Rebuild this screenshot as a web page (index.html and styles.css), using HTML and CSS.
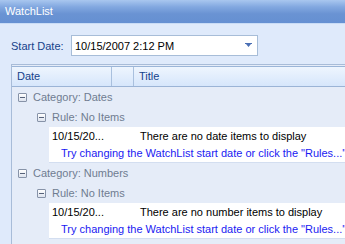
FILE: index.html
```html
<!DOCTYPE html>
<html>
<head>
<meta charset="utf-8">
<link rel="stylesheet" href="styles.css">
</head>
<body>
<div class="window">
  <div class="titlebar">WatchList</div>
  <div class="toolbar">
    <span class="label">Start Date:</span>
    <div class="combo">
      <span class="combo-text">10/15/2007 2:12 PM</span>
      <svg class="combo-arrow" width="7" height="5" viewBox="0 0 7 5"><path d="M0 0h7v1H0z M1 1h5l-2.5 3z" fill="#4b6fb4"/></svg>
    </div>
  </div>
  <div class="grid">
    <div class="grid-header">
      <div class="col col-date">Date</div>
      <div class="col col-gap"></div>
      <div class="col col-title">Title</div>
    </div>
    <div class="grid-body">
      <div class="group cat"><span class="toggle"></span>Category: Dates</div>
      <div class="group rule"><span class="toggle"></span>Rule: No Items</div>
      <div class="item">
        <div class="item-line"><span class="item-date">10/15/20...</span><span>There are no date items to display</span></div>
        <div class="item-link">Try changing the WatchList start date or click the "Rules..."</div>
      </div>
      <div class="group cat"><span class="toggle"></span>Category: Numbers</div>
      <div class="group rule"><span class="toggle"></span>Rule: No Items</div>
      <div class="item">
        <div class="item-line"><span class="item-date">10/15/20...</span><span>There are no number items to display</span></div>
        <div class="item-link">Try changing the WatchList start date or click the "Rules..."</div>
      </div>
      <div class="group cat"><span class="toggle"></span>Category: Hold</div>
    </div>
  </div>
</div>
</body>
</html>
```
FILE: styles.css
```css
html, body {
  margin: 0;
  padding: 0;
}
body {
  width: 345px;
  height: 244px;
  overflow: hidden;
  background: #dfeafb;
  font-family: "Liberation Sans", Arial, sans-serif;
  font-size: 11px;
}
.window {
  display: flex;
  flex-direction: column;
  width: 345px;
  height: 244px;
  overflow: hidden;
}
.titlebar {
  height: 23px;
  line-height: 22px;
  padding-left: 5px;
  color: #ffffff;
  font-size: 11px;
  background: linear-gradient(#a9c7ef 0, #82a8e0 30%, #6a93d3 60%, #6590d2 100%);
  border-bottom: 1px solid #c9dcf6;
  flex: none;
}
.toolbar {
  display: flex;
  align-items: center;
  padding: 11px 0 0 11px;
  height: 21px;
  flex: none;
}
.label {
  color: #15428b;
  font-size: 11px;
  width: 60px;
}
.combo {
  box-sizing: border-box;
  width: 187px;
  height: 21px;
  background: #fff;
  border: 1px solid #a7bdd8;
  display: flex;
  align-items: center;
  padding-left: 3px;
  padding-right: 5px;
}
.combo-text {
  flex: 1;
  color: #000;
  font-size: 11px;
}
.combo-arrow {
  display: block;
}
.grid {
  margin-top: 8px;
  margin-left: 11px;
  border-top: 1px solid #a8bcd8;
  border-left: 1px solid #a8bcd8;
  padding-top: 1px;
  background: #e5ecf8;
  flex: 1;
  display: flex;
  flex-direction: column;
}
.grid-header {
  display: flex;
  height: 19px;
  border-top: 1px solid #9bb5d8;
  border-bottom: 1px solid #9bb4d6;
  background: linear-gradient(#eef5fe, #d6e6fb);
  flex: none;
}
.col {
  box-sizing: border-box;
  line-height: 19px;
  color: #15428b;
  font-size: 11px;
  border-right: 1px solid #a9c0de;
}
.col-date {
  width: 100px;
  padding-left: 5px;
}
.col-gap {
  width: 22px;
}
.col-title {
  flex: 1;
  padding-left: 5px;
  border-right: none;
}
.grid-body {
  display: flex;
  flex-direction: column;
}
.group {
  height: 20px;
  display: flex;
  align-items: center;
  color: #6f7c91;
  font-size: 11px;
}
.cat {
  padding-left: 6px;
}
.rule {
  padding-left: 25px;
}
.toggle {
  box-sizing: border-box;
  width: 9px;
  height: 9px;
  border: 1px solid #8793a8;
  border-radius: 1px;
  background: linear-gradient(#ffffff, #dde3ee);
  position: relative;
  margin-right: 6px;
}
.toggle::after {
  content: "";
  position: absolute;
  left: 1px;
  top: 3px;
  width: 5px;
  height: 1px;
  background: #56627a;
}
.item {
  margin-left: 37px;
  height: 35px;
  background: #ffffff;
  border-bottom: 1px solid #d3def0;
  display: flex;
  flex-direction: column;
  white-space: nowrap;
  overflow: hidden;
}
.item-line {
  height: 18px;
  line-height: 19px;
  padding-left: 3px;
  color: #000;
  font-size: 11px;
  display: flex;
}
.item-date {
  width: 88px;
}
.item-link {
  height: 17px;
  line-height: 17px;
  padding-left: 12px;
  color: #1a1af2;
  font-size: 11px;
}
```
